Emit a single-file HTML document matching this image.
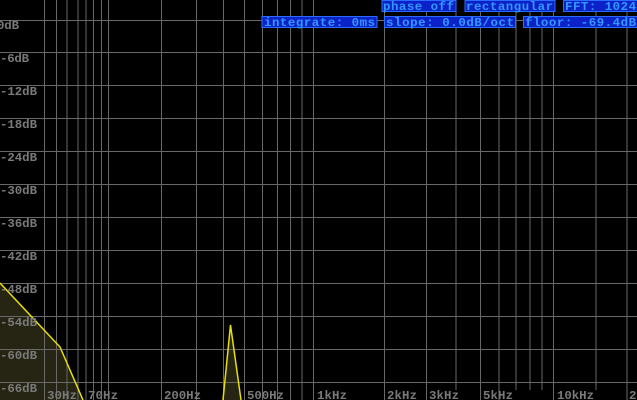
<!DOCTYPE html>
<html><head><style>
html,body{margin:0;padding:0;background:#000;width:637px;height:400px;overflow:hidden}
svg{display:block}
text{font-family:"Liberation Mono",monospace;font-size:12.4px;font-weight:bold}
.l{fill:#7a7a7a}
.b{fill:#3399ff;font-size:13px}
</style></head><body>
<svg width="637" height="400" xmlns="http://www.w3.org/2000/svg">
<rect width="637" height="400" fill="#000"/>
<polygon points="0,283 60,347 83,400 0,400" fill="#262412"/>
<polygon points="223,400 230.5,325 241,400" fill="#262412"/>
<g stroke="#686868" stroke-width="1">
<line x1="44.5" y1="0" x2="44.5" y2="400"/>
<line x1="56.5" y1="0" x2="56.5" y2="400"/>
<line x1="67" y1="0" x2="67" y2="400"/>
<line x1="78" y1="0" x2="78" y2="400"/>
<line x1="86" y1="0" x2="86" y2="400"/>
<line x1="93.5" y1="0" x2="93.5" y2="400"/>
<line x1="101.5" y1="0" x2="101.5" y2="400"/>
<line x1="108.5" y1="0" x2="108.5" y2="400"/>
<line x1="161.5" y1="0" x2="161.5" y2="400"/>
<line x1="196.5" y1="0" x2="196.5" y2="400"/>
<line x1="223.5" y1="0" x2="223.5" y2="400"/>
<line x1="244.5" y1="0" x2="244.5" y2="400"/>
<line x1="262.5" y1="0" x2="262.5" y2="400"/>
<line x1="277.5" y1="0" x2="277.5" y2="400"/>
<line x1="290.5" y1="0" x2="290.5" y2="400"/>
<line x1="302" y1="0" x2="302" y2="400"/>
<line x1="313.5" y1="0" x2="313.5" y2="400"/>
<line x1="384.5" y1="0" x2="384.5" y2="400"/>
<line x1="426.5" y1="0" x2="426.5" y2="400"/>
<line x1="456" y1="0" x2="456" y2="390"/>
<line x1="480.5" y1="0" x2="480.5" y2="400"/>
<line x1="499" y1="0" x2="499" y2="400"/>
<line x1="516" y1="0" x2="516" y2="390"/>
<line x1="530" y1="0" x2="530" y2="390"/>
<line x1="542" y1="0" x2="542" y2="390"/>
<line x1="553.5" y1="0" x2="553.5" y2="400"/>
<line x1="596" y1="0" x2="596" y2="390"/>
<line x1="627" y1="0" x2="627" y2="400"/>
<line x1="0" y1="20.5" x2="637" y2="20.5"/>
<line x1="0" y1="52.5" x2="637" y2="52.5"/>
<line x1="0" y1="85.5" x2="637" y2="85.5"/>
<line x1="0" y1="118.5" x2="637" y2="118.5"/>
<line x1="0" y1="151.5" x2="637" y2="151.5"/>
<line x1="0" y1="184.5" x2="637" y2="184.5"/>
<line x1="0" y1="217.5" x2="637" y2="217.5"/>
<line x1="0" y1="250.5" x2="637" y2="250.5"/>
<line x1="0" y1="283.5" x2="637" y2="283.5"/>
<line x1="0" y1="316.5" x2="637" y2="316.5"/>
<line x1="0" y1="349.5" x2="637" y2="349.5"/>
<line x1="0" y1="382.5" x2="637" y2="382.5"/>
</g>
<polyline points="0,283 60,347 83,400" fill="none" stroke="#e8e000" stroke-width="1.5"/>
<polyline points="223,400 230.5,325 241,400" fill="none" stroke="#e8e000" stroke-width="1.5"/>
<g class="l">
<text x="-3" y="29" textLength="22">0dB</text>
<text x="0" y="62" textLength="29">-6dB</text>
<text x="0" y="95" textLength="37">-12dB</text>
<text x="0" y="128" textLength="37">-18dB</text>
<text x="0" y="161" textLength="37">-24dB</text>
<text x="0" y="194" textLength="37">-30dB</text>
<text x="0" y="227" textLength="37">-36dB</text>
<text x="0" y="260" textLength="37">-42dB</text>
<text x="0" y="293" textLength="37">-48dB</text>
<text x="0" y="326" textLength="37">-54dB</text>
<text x="0" y="359" textLength="37">-60dB</text>
<text x="0" y="392" textLength="37">-66dB</text>
<text x="47" y="399" textLength="30">30Hz</text>
<text x="88" y="399" textLength="30">70Hz</text>
<text x="164" y="399" textLength="37">200Hz</text>
<text x="247" y="399" textLength="37">500Hz</text>
<text x="317" y="399" textLength="30">1kHz</text>
<text x="387" y="399" textLength="30">2kHz</text>
<text x="429" y="399" textLength="30">3kHz</text>
<text x="483" y="399" textLength="30">5kHz</text>
<text x="557" y="399" textLength="37">10kHz</text>
<text x="629" y="399">2</text>
</g>
<g fill="#0a22c8" stroke="#2a6cff" stroke-width="1">
<rect x="382" y="0.5" width="74" height="11"/>
<rect x="465" y="0.5" width="90" height="11"/>
<rect x="563.5" y="0.5" width="74" height="11"/>
<rect x="262" y="16.5" width="115" height="11"/>
<rect x="384.5" y="16.5" width="131" height="11"/>
<rect x="523.5" y="16.5" width="114" height="11"/>
</g>
<g class="b">
<text x="383" y="10" textLength="71">phase off</text>
<text x="466" y="10" textLength="87">rectangular</text>
<text x="565" y="10" textLength="71">FFT: 1024</text>
<text x="264" y="26" textLength="111">integrate: 0ms</text>
<text x="386" y="26" textLength="128">slope: 0.0dB/oct</text>
<text x="525" y="26" textLength="111">floor: -69.4dB</text>
</g>
</svg>
</body></html>
